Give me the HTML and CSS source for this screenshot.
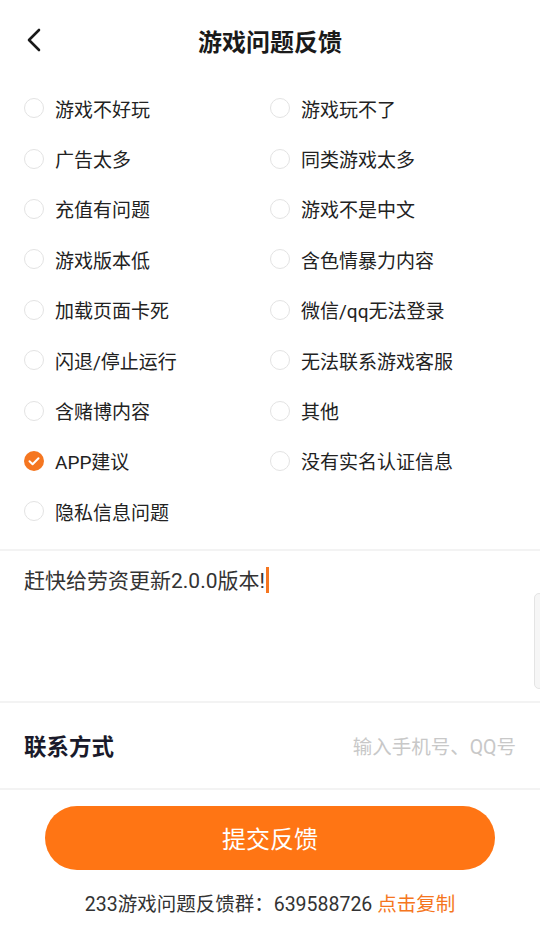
FILE: index.html
```html
<!DOCTYPE html>
<html lang="zh-CN">
<head>
    <meta charset="UTF-8">
    <meta name="viewport" content="width=device-width, initial-scale=1.0">
    <title>游戏问题反馈</title>
    <link rel="stylesheet" href="styles.css">
</head>
<body>

<div class="page">
    <!-- Header -->
    <div class="header">
        <span class="back">
            <svg width="16" height="24" viewBox="0 0 16 24">
                <path d="M13 2 L3 12 L13 22" fill="none" stroke="#1a1a1a" stroke-width="2.6" stroke-linecap="round" stroke-linejoin="round"/>
            </svg>
        </span>
        <h1>游戏问题反馈</h1>
    </div>

    <!-- Options -->
    <div class="options">
        <label class="option"><span class="radio"></span>游戏不好玩</label>
        <label class="option"><span class="radio"></span>游戏玩不了</label>
        <label class="option"><span class="radio"></span>广告太多</label>
        <label class="option"><span class="radio"></span>同类游戏太多</label>
        <label class="option"><span class="radio"></span>充值有问题</label>
        <label class="option"><span class="radio"></span>游戏不是中文</label>
        <label class="option"><span class="radio"></span>游戏版本低</label>
        <label class="option"><span class="radio"></span>含色情暴力内容</label>
        <label class="option"><span class="radio"></span>加载页面卡死</label>
        <label class="option"><span class="radio"></span>微信/qq无法登录</label>
        <label class="option"><span class="radio"></span>闪退/停止运行</label>
        <label class="option"><span class="radio"></span>无法联系游戏客服</label>
        <label class="option"><span class="radio"></span>含赌博内容</label>
        <label class="option"><span class="radio"></span>其他</label>
        <label class="option">
            <span class="radio checked">
                <svg width="20" height="20" viewBox="0 0 20 20">
                    <path d="M5.5 10.2 L8.6 13.2 L14.5 7.3" fill="none" stroke="#fff" stroke-width="2" stroke-linecap="round" stroke-linejoin="round"/>
                </svg>
            </span>APP建议
        </label>
        <label class="option"><span class="radio"></span>没有实名认证信息</label>
        <label class="option"><span class="radio"></span>隐私信息问题</label>
    </div>

    <!-- Description -->
    <div class="desc">
        <p>赶快给劳资更新2.0.0版本!<span class="caret"></span></p>
        <span class="handle"></span>
    </div>

    <!-- Contact -->
    <div class="contact">
        <span class="contact-label">联系方式</span>
        <span class="contact-input">输入手机号、QQ号</span>
    </div>

    <!-- Submit -->
    <div class="submit-wrap">
        <button class="submit">提交反馈</button>
    </div>

    <p class="group">233游戏问题反馈群：639588726 <span class="copy">点击复制</span></p>
</div>

</body>
</html>
```

FILE: styles.css
```css
/* Base */
body {
    margin: 0;
    background: #fff;
    font-family: Roboto, "Noto Sans CJK SC", sans-serif;
    color: #222;
    overflow: hidden;
}

.page {
    width: 540px;
    position: relative;
    overflow: hidden;
}

/* Header */
.header {
    height: 80px;
    display: flex;
    align-items: center;
    justify-content: center;
    position: relative;
}

.back {
    position: absolute;
    left: 26px;
    top: 28px;
    display: flex;
}

h1 {
    margin: 0;
    font-size: 24px;
    font-weight: bold;
    color: #1a1a1a;
}

/* Options */
.options {
    display: grid;
    grid-template-columns: 246px 1fr;
    grid-auto-rows: 50.4px;
    padding: 3px 0 12px 24px;
}

.option {
    display: flex;
    align-items: center;
    font-size: 19px;
    color: #222;
}

.radio {
    width: 18px;
    height: 18px;
    border: 1px solid #e3e3e3;
    border-radius: 50%;
    margin-right: 11px;
    flex-shrink: 0;
    display: flex;
}

.radio.checked {
    width: 20px;
    height: 20px;
    border: none;
    background: #f57620;
}

/* Description */
.desc {
    border-top: 2px solid #f3f3f3;
    border-bottom: 2px solid #f3f3f3;
    height: 150px;
    position: relative;
}

.desc p {
    margin: 15px 0 0 24px;
    font-size: 21px;
    color: #333;
    line-height: 30px;
}

.caret {
    display: inline-block;
    width: 3px;
    height: 26px;
    background: #f57620;
    vertical-align: -5px;
    margin-left: 1px;
}

.handle {
    position: absolute;
    right: -4px;
    top: 42px;
    width: 8px;
    height: 94px;
    border: 1px solid #e4e4e4;
    border-radius: 5px;
    background: #f6f6f6;
}

/* Contact */
.contact {
    height: 85px;
    display: flex;
    align-items: center;
    justify-content: space-between;
    padding: 0 24px;
    border-bottom: 2px solid #f3f3f3;
}

.contact-label {
    font-size: 22.5px;
    font-weight: bold;
    color: #1a1a2a;
}

.contact-input {
    font-size: 19.5px;
    color: #c8c8c8;
}

/* Submit */
.submit-wrap {
    padding: 16px 45px 0;
}

.submit {
    width: 100%;
    height: 64px;
    border: none;
    border-radius: 32px;
    background: #ff7514;
    color: #fff;
    font-family: Roboto, "Noto Sans CJK SC", sans-serif;
    font-size: 24px;
}

.group {
    margin: 18px 0 0;
    text-align: center;
    font-size: 19.5px;
    color: #333;
}

.copy {
    color: #f57620;
}
```
